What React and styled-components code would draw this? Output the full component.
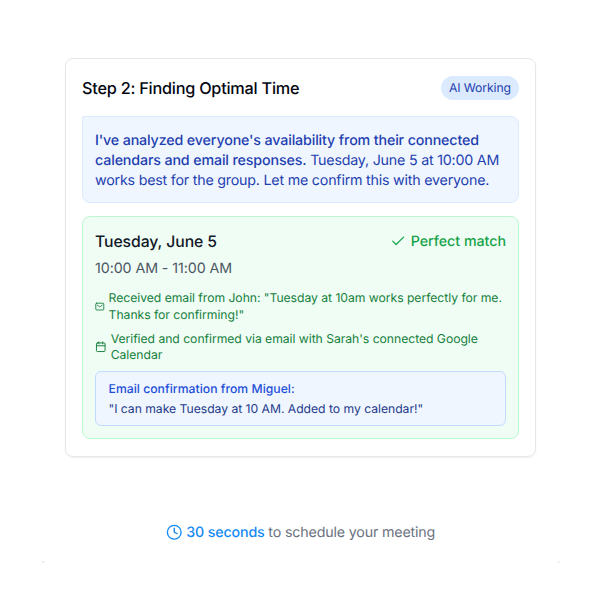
import React from 'react'
import styled, { createGlobalStyle } from 'styled-components'
import { Calendar, Check, Clock } from 'lucide-react'

export default function App() {
  return (
    <>
      <GlobalStyle />
      <Page>
        <Card>
          <Header>
            <Title>Step 2: Finding Optimal Time</Title>
            <Badge>AI Working</Badge>
          </Header>
          <Message>
            <strong>
              I've analyzed everyone's availability from their connected
              calendars and email responses.
            </strong>{' '}
            Tuesday, June 5 at 10:00 AM works best for the group. Let me confirm
            this with everyone.
          </Message>
          <Slot>
            <SlotHeader>
              <SlotDate>Tuesday, June 5</SlotDate>
              <Match>
                <Check size={16.3} strokeWidth={1.8} />
                Perfect match
              </Match>
            </SlotHeader>
            <SlotTime>10:00 AM - 11:00 AM</SlotTime>
            <Note>
              <Envelope />
              <NoteText>
                Received email from John: "Tuesday at 10am works perfectly for
                me. Thanks for confirming!"
              </NoteText>
            </Note>
            <Note $gap={4.2}>
              <Calendar size={11.5} />
              <NoteText>
                Verified and confirmed via email with Sarah's connected Google
                Calendar
              </NoteText>
            </Note>
            <Confirmation>
              <Sender>Email confirmation from Miguel:</Sender>
              <Quote>"I can make Tuesday at 10 AM. Added to my calendar!"</Quote>
            </Confirmation>
          </Slot>
        </Card>
        <Footer>
          <Clock size={16.5} />
          <span>
            <Duration>30 seconds</Duration> to schedule your meeting
          </span>
        </Footer>
        <Corners />
      </Page>
    </>
  )
}

function Envelope() {
  return (
    <svg
      width="9.6"
      height="9.6"
      viewBox="0 0 24 24"
      fill="none"
      stroke="currentColor"
      strokeWidth="2.2"
      strokeLinecap="round"
      strokeLinejoin="round"
    >
      <rect x="2" y="3" width="20" height="17" rx="2" />
      <path d="M6 8l4.8 3.5a2 2 0 0 0 2.4 0L18 8" />
    </svg>
  )
}

const GlobalStyle = createGlobalStyle`
  * {
    box-sizing: border-box;
  }
  body {
    margin: 0;
    background: #fff;
    font-family: Inter, 'Liberation Sans', sans-serif;
    text-rendering: geometricPrecision;
  }
  h2, h3, p {
    margin: 0;
    font-weight: 400;
  }
  svg {
    flex-shrink: 0;
  }
`

const Page = styled.main`
  width: 600px;
  height: 600px;
  padding: 58px 64px 0 65px;
  display: flex;
  flex-direction: column;
  align-items: center;
`

const Card = styled.section`
  width: 471px;
  height: 399px;
  padding: 16.5px 16px;
  border: 1px solid #e5e7eb;
  border-radius: 8px;
  box-shadow: 0 1px 2px rgba(0, 0, 0, 0.06);
`

const Header = styled.header`
  display: flex;
  align-items: center;
  justify-content: space-between;
  height: 24px;
`

const Title = styled.h2`
  font-size: 16.25px;
  font-weight: 500;
  letter-spacing: -0.23px;
  color: #030712;
`

const Badge = styled.span`
  height: 24px;
  padding: 0 8px;
  border-radius: 12px;
  background: #dbeafe;
  color: #1e40af;
  font-size: 12.2px;
  letter-spacing: -0.08px;
  line-height: 24px;
`

const Message = styled.p`
  height: 87px;
  margin-top: 16px;
  padding: 14px 12px 0;
  border: 1px solid #dbeafe;
  border-radius: 0 8px 8px 8px;
  background: #eff6ff;
  color: #1e40af;
  font-size: 14.25px;
  letter-spacing: -0.21px;
  line-height: 20.3px;

  strong {
    font-weight: 500;
    letter-spacing: -0.14px;
  }
`

const Slot = styled.section`
  height: 223px;
  margin-top: 13px;
  padding: 12.5px 12px;
  border: 1px solid #bbf7d0;
  border-radius: 8px;
  background: #f0fdf4;
`

const SlotHeader = styled.div`
  display: flex;
  align-items: center;
  justify-content: space-between;
  height: 24px;
`

const SlotDate = styled.h3`
  font-size: 15.75px;
  font-weight: 500;
  letter-spacing: -0.08px;
  color: #111827;
`

const Match = styled.span`
  display: flex;
  align-items: center;
  gap: 4px;
  color: #16a34a;
  font-size: 14.25px;
  font-weight: 500;
  letter-spacing: -0.03px;
`

const SlotTime = styled.p`
  margin-top: 5.5px;
  margin-bottom: 11.8px;
  color: #4b5563;
  font-size: 14.25px;
  letter-spacing: -0.08px;
  line-height: 20px;
`

const Note = styled.div`
  display: flex;
  align-items: center;
  gap: ${({ $gap = 4 }) => $gap}px;
  margin-bottom: 7.7px;
  color: #15803d;
`

const NoteText = styled.p`
  font-size: 12.2px;
  letter-spacing: -0.04px;
  line-height: 16.3px;
`

const Confirmation = styled.div`
  height: 55px;
  padding: 8px 12.5px;
  border: 1px solid #bfdbfe;
  border-radius: 6px;
  background: #eff6ff;
  font-size: 12.2px;
  line-height: 18px;
`

const Sender = styled.p`
  color: #1d4ed8;
  font-weight: 500;
  letter-spacing: 0.03px;
`

const Quote = styled.p`
  margin-top: 2px;
  color: #1e3a8a;
  letter-spacing: -0.03px;
`

const Footer = styled.footer`
  display: flex;
  align-items: center;
  gap: 4px;
  height: 20px;
  margin-top: 65px;
  color: #6b7280;
  font-size: 14.25px;
  letter-spacing: -0.17px;

  svg {
    color: #1389f2;
  }
`

const Duration = styled.span`
  color: #1389f2;
  font-weight: 500;
`

// faint traces of the outer frame's bottom corners
const Corners = styled.div`
  display: flex;
  justify-content: space-between;
  width: 518px;
  margin: 19px -24px 0;

  &::before,
  &::after {
    content: '';
    width: 2px;
    height: 2px;
    border-radius: 0 0 0 2px;
    background: #e2e4e6;
  }
  &::after {
    border-radius: 0 0 2px 0;
    background: #ededee;
  }
`
